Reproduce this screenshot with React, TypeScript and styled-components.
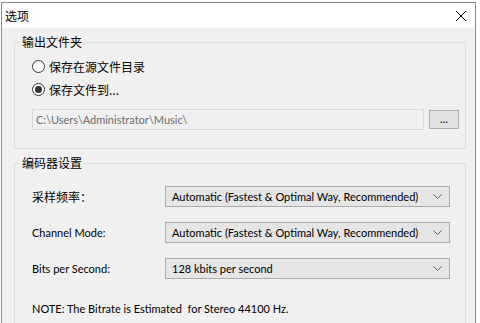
import React from "react";
import styled, { createGlobalStyle } from "styled-components";

const Global = createGlobalStyle`
  html, body { margin: 0; padding: 0; background: #ffffff; overflow: hidden; }
  body { font-family: "Lato", "Noto Sans CJK SC", sans-serif; font-size: 11px; color: #000; }
  * { box-sizing: border-box; }
`;

const FONT = `"Lato", "Noto Sans CJK SC", sans-serif`;
const CJK = `"Noto Sans CJK SC", sans-serif`;

const Window = styled.div`
  margin: 2px 4px 0 1px;
  height: 321px;
  border-top: 1px solid #8a8a8a;
  border-left: 1px solid #8a8a8a;
  border-right: 1px solid #8a8a8a;
  display: flex;
  flex-direction: column;
  background: #f0f0f0;
`;

const TitleBar = styled.div`
  height: 25px;
  background: #ffffff;
  display: flex;
  align-items: center;
  justify-content: space-between;
  padding: 0 8px 0 3px;
`;

const Title = styled.span`
  font-family: ${CJK};
  font-size: 12px;
  line-height: 16px;
  color: #000;
`;

const Close = styled.svg`
  width: 12px;
  height: 12px;
  margin-top: 1px;
`;

const Client = styled.div`
  flex: 1;
  padding: 6px 9px 0 12px;
  display: flex;
  flex-direction: column;
  gap: 6px;
`;

const Group = styled.fieldset<{ $open?: boolean }>`
  margin: 0;
  border: 1px solid #dcdcdc;
  border-radius: 0;
  padding: 5px 0 0 17px;
  ${(p) => (p.$open ? "border-bottom: none; flex: 1; padding-top: 0;" : "")}
`;

const Legend = styled.legend`
  font-family: ${CJK};
  font-size: 12px;
  line-height: 16px;
  padding: 0 2px;
  margin-left: -12px;
  color: #000;
`;

const RadioRow = styled.label`
  display: flex;
  align-items: center;
  gap: 4px;
  height: 23px;
  font-family: ${CJK};
  font-size: 12px;
  color: #000;
`;

const RadioCircle = styled.span<{ $checked?: boolean }>`
  width: 13px;
  height: 13px;
  border-radius: 50%;
  border: 1px solid #333333;
  background: #ffffff;
  display: flex;
  align-items: center;
  justify-content: center;
  &::after {
    content: "";
    width: 7px;
    height: 7px;
    border-radius: 50%;
    background: ${(p) => (p.$checked ? "#333333" : "transparent")};
  }
`;

const PathRow = styled.div`
  display: flex;
  align-items: center;
  gap: 5px;
  margin-top: 8px;
  margin-bottom: 18px;
`;

const PathInput = styled.div`
  width: 392px;
  height: 21px;
  border: 1px solid #d9d9d9;
  background: #f0f0f0;
  display: flex;
  align-items: center;
  padding-left: 3px;
  font-family: ${FONT};
  font-size: 11px;
  color: #6d6d6d;
`;

const BrowseButton = styled.div`
  width: 30px;
  height: 19px;
  border: 1px solid #adadad;
  background: #e1e1e1;
  display: flex;
  align-items: center;
  justify-content: center;
  font-family: ${FONT};
  font-size: 11px;
  color: #000;
  padding-bottom: 3px;
`;

const Rows = styled.div`
  display: flex;
  flex-direction: column;
  gap: 15px;
  margin-top: 15px;
`;

const FieldRow = styled.div`
  display: flex;
  align-items: center;
`;

const Label = styled.span<{ $cjk?: boolean }>`
  width: 133px;
  font-family: ${(p) => (p.$cjk ? CJK : FONT)};
  font-size: ${(p) => (p.$cjk ? "12px" : "11px")};
  color: #000;
`;

const Select = styled.div`
  width: 285px;
  height: 21px;
  border: 1px solid #acacac;
  background: #e5e5e5;
  display: flex;
  align-items: center;
  justify-content: space-between;
  padding: 0 7px 0 6px;
  font-family: ${FONT};
  font-size: 11px;
  color: #000;
  white-space: nowrap;
`;

const Chevron = styled.svg`
  width: 9px;
  height: 6px;
  flex-shrink: 0;
`;

const Note = styled.div`
  margin-top: 23px;
  font-family: ${FONT};
  font-size: 11px;
  color: #000;
`;

const rows = [
  { label: "采样频率：", cjk: true, value: "Automatic (Fastest & Optimal Way, Recommended)" },
  { label: "Channel Mode:", cjk: false, value: "Automatic (Fastest & Optimal Way, Recommended)" },
  { label: "Bits per Second:", cjk: false, value: "128 kbits per second" },
];

export default function App() {
  return (
    <>
      <Global />
      <Window>
        <TitleBar>
          <Title>选项</Title>
          <Close viewBox="0 0 12 12">
            <path d="M1 1 L11 11 M11 1 L1 11" stroke="#000" strokeWidth="1" fill="none" />
          </Close>
        </TitleBar>
        <Client>
          <Group>
            <Legend>输出文件夹</Legend>
            <RadioRow>
              <RadioCircle />
              保存在源文件目录
            </RadioRow>
            <RadioRow>
              <RadioCircle $checked />
              保存文件到...
            </RadioRow>
            <PathRow>
              <PathInput>C:\Users\Administrator\Music\</PathInput>
              <BrowseButton>...</BrowseButton>
            </PathRow>
          </Group>
          <Group $open>
            <Legend>编码器设置</Legend>
            <Rows>
              {rows.map((r) => (
                <FieldRow key={r.label}>
                  <Label $cjk={r.cjk}>{r.label}</Label>
                  <Select>
                    <span>{r.value}</span>
                    <Chevron viewBox="0 0 9 6">
                      <path d="M0.5 0.5 L4.5 4.5 L8.5 0.5" stroke="#606060" strokeWidth="1" fill="none" />
                    </Chevron>
                  </Select>
                </FieldRow>
              ))}
            </Rows>
            <Note>NOTE: The Bitrate is Estimated&nbsp; for Stereo 44100 Hz.</Note>
          </Group>
        </Client>
      </Window>
    </>
  );
}
